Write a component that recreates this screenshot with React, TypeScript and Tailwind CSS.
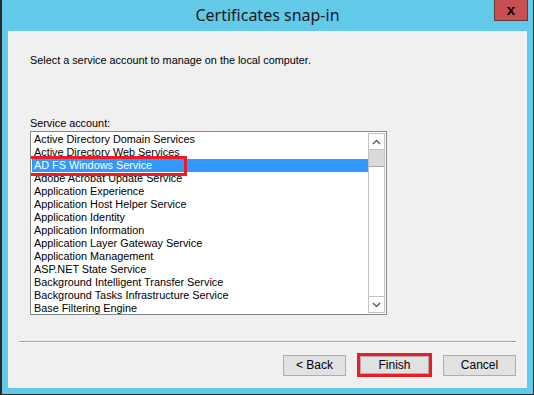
import React from "react";

const services = [
  "Active Directory Domain Services",
  "Active Directory Web Services",
  "AD FS Windows Service",
  "Adobe Acrobat Update Service",
  "Application Experience",
  "Application Host Helper Service",
  "Application Identity",
  "Application Information",
  "Application Layer Gateway Service",
  "Application Management",
  "ASP.NET State Service",
  "Background Intelligent Transfer Service",
  "Background Tasks Infrastructure Service",
  "Base Filtering Engine",
];

const selected = 2;

function ScrollArrow({ up }: { up: boolean }) {
  return (
    <svg width="9" height="6" viewBox="0 0 9 6" className="block">
      <path
        d={up ? "M1 5 L4.5 1.5 L8 5" : "M1 1 L4.5 4.5 L8 1"}
        fill="none"
        stroke="#606060"
        strokeWidth="1.5"
      />
    </svg>
  );
}

export default function App() {
  return (
    <div
      className="w-[534px] h-[395px] bg-[#2b2b2b] pl-[2px] pr-[1px] pb-[1px] overflow-hidden"
      style={{ fontFamily: '"Liberation Sans", Arial, sans-serif' }}
    >
      <div className="w-full h-full bg-[#63c9e9] flex flex-col px-[6px] pb-[6px]">
        {/* title bar */}
        <div className="relative h-[31px] shrink-0 flex items-center justify-center">
          <span
            className="text-[16px] text-[#1a1a1a] pb-[1px]"
            style={{ fontFamily: '"Noto Sans", "Open Sans", sans-serif' }}
          >
            Certificates snap-in
          </span>
          <div className="absolute right-[-1px] top-0 w-[34px] h-[21px] bg-[#c75050] border border-[#5e3a38] border-t-0 flex items-center justify-center">
            <span className="text-[15px] font-bold text-black leading-none pb-[2px]">x</span>
          </div>
        </div>

        {/* client area */}
        <div className="flex-1 bg-[#f0f0f0] flex flex-col text-[10.85px] text-black">
          <div className="pl-[22px] pt-[23px] leading-[13px] shrink-0">
            Select a service account to manage on the local computer.
          </div>

          <div className="pl-[22px] mt-[50px] leading-[13px] shrink-0">Service account:</div>

          <div className="ml-[22px] mt-[1px] w-[357px] h-[184px] shrink-0 border border-[#828790] bg-white flex">
            <div className="flex-1 pt-[1px] pl-[1px] overflow-hidden">
              {services.map((s, i) => (
                <div
                  key={s}
                  className={
                    i === selected
                      ? "relative h-[13px] leading-[13px] px-[2px] bg-[#3399ff] text-white whitespace-nowrap"
                      : "h-[13px] leading-[13px] px-[2px] whitespace-nowrap"
                  }
                >
                  {s}
                  {i === selected && (
                    <div className="absolute left-[-4px] top-[-3px] w-[159px] h-[20px] border-[3px] border-[#ed1c24]" />
                  )}
                </div>
              ))}
            </div>
            <div className="w-[17px] my-[1px] mr-[1px] border border-[#c2c2c2] flex flex-col">
              <div className="h-[16px] border-b border-[#c2c2c2] flex items-center justify-center">
                <ScrollArrow up />
              </div>
              <div className="h-[17px] bg-[#dadada] border-b border-[#a8a8a8]" />
              <div className="flex-1" />
              <div className="h-[16px] border-t border-[#c2c2c2] flex items-center justify-center">
                <ScrollArrow up={false} />
              </div>
            </div>
          </div>

          <div className="mx-[11px] mt-[26px] h-[2px] shrink-0 border-t border-[#a0a0a0] border-b border-b-white" />

          <div className="flex items-center justify-end pr-[11px] mt-[10px] shrink-0">
            <button className="w-[63px] h-[21px] bg-[#e1e1e1] border border-[#adadad] text-[12px] leading-none">
              &lt; Back
            </button>
            <div className="ml-[11px] w-[75px] h-[24px] border-[3px] border-[#ed1c24] p-0">
              <button className="w-full h-full bg-[#e1e1e1] border border-[#adadad] text-[12px] leading-none">
                Finish
              </button>
            </div>
            <button className="ml-[11px] w-[73px] h-[21px] bg-[#e1e1e1] border border-[#adadad] text-[12px] leading-none">
              Cancel
            </button>
          </div>
        </div>
      </div>
    </div>
  );
}
